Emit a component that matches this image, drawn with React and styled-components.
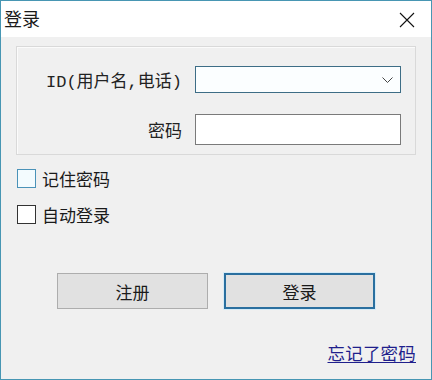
import React from "react";
import styled, { createGlobalStyle } from "styled-components";

const GlobalStyle = createGlobalStyle`
  html, body {
    margin: 0;
    padding: 0;
    background: #f0f0f0;
  }
  * {
    box-sizing: border-box;
  }
`;

const cjk = `"Microsoft YaHei", "Noto Sans CJK SC", "Noto Sans", sans-serif`;

const Window = styled.div`
  width: 432px;
  height: 380px;
  border: 1px solid #4796b3;
  background: #f0f0f0;
  display: flex;
  flex-direction: column;
  font-family: ${cjk};
  color: #1a1a1a;
`;

const TitleBar = styled.div`
  height: 36px;
  background: #ffffff;
  display: flex;
  align-items: center;
  justify-content: space-between;
  padding: 0 16px 0 3px;
`;

const Title = styled.span`
  font-size: 18px;
  line-height: 20px;
  margin-top: -2px;
`;

const CloseButton = styled.div`
  width: 16px;
  height: 16px;
  display: flex;
  margin-top: 1px;
`;

const Body = styled.div`
  flex: 1;
  display: flex;
  flex-direction: column;
  padding: 9px 15px 0 15px;
`;

const GroupBox = styled.div`
  border: 1px solid #d9d9d9;
  box-shadow: inset 1px 1px 0 #fbfbfb;
  height: 109px;
  display: grid;
  grid-template-columns: 165px 206px;
  grid-template-rows: 27px 31px;
  column-gap: 13px;
  row-gap: 21px;
  padding-top: 19px;
  align-items: center;
`;

const Label = styled.label`
  text-align: right;
  font-size: 17px;
  font-family: "Liberation Mono", ${cjk};
  font-weight: 400;
  white-space: nowrap;
  color: #222;
`;

const Combo = styled.div`
  height: 27px;
  border: 1px solid #3d6d86;
  background: #fbfeff;
  display: flex;
  align-items: center;
  justify-content: flex-end;
  padding-right: 7px;
`;

const TextInput = styled.div`
  height: 31px;
  border: 1px solid #7a7a7a;
  background: #ffffff;
`;

const Checks = styled.div`
  display: flex;
  flex-direction: column;
  gap: 17px;
  margin-top: 14px;
  padding-left: 1px;
`;

const CheckRow = styled.div`
  display: flex;
  align-items: center;
  gap: 6px;
  font-size: 17px;
  height: 19px;
`;

const Box = styled.span`
  width: 19px;
  height: 19px;
  border: 1px solid ${(p) => (p.$active ? "#4a92b8" : "#333333")};
  background: ${(p) => (p.$active ? "#f3fbfe" : "#ffffff")};
`;

const Buttons = styled.div`
  display: flex;
  justify-content: center;
  gap: 16px;
  margin-top: 49px;
`;

const Button = styled.div`
  width: 151px;
  height: 36px;
  background: #e1e1e1;
  border: ${(p) => (p.$primary ? "2px solid #2a6f9f" : "1px solid #adadad")};
  box-shadow: ${(p) => (p.$primary ? "0 0 0 1px #d5ebf7" : "none")};
  display: flex;
  align-items: center;
  justify-content: center;
  font-size: 17px;
`;

const Footer = styled.div`
  display: flex;
  justify-content: flex-end;
  margin-top: 31px;
`;

const Link = styled.a`
  font-size: 17.5px;
  color: #1f1f8c;
  text-decoration: underline;
  text-underline-offset: 2px;
  letter-spacing: 0.2px;
`;

export default function App() {
  return (
    <>
      <GlobalStyle />
      <Window>
        <TitleBar>
          <Title>登录</Title>
          <CloseButton>
            <svg width="16" height="16" viewBox="0 0 16 16">
              <path d="M1 1 L15 15 M15 1 L1 15" stroke="#111" strokeWidth="1.1" fill="none" />
            </svg>
          </CloseButton>
        </TitleBar>
        <Body>
          <GroupBox>
            <Label>ID(用户名,电话)</Label>
            <Combo>
              <svg width="11" height="6" viewBox="0 0 11 6">
                <path d="M0.5 0.5 L5.5 5.5 L10.5 0.5" stroke="#444" strokeWidth="1" fill="none" />
              </svg>
            </Combo>
            <Label>密码</Label>
            <TextInput />
          </GroupBox>
          <Checks>
            <CheckRow>
              <Box $active />
              记住密码
            </CheckRow>
            <CheckRow>
              <Box />
              自动登录
            </CheckRow>
          </Checks>
          <Buttons>
            <Button>注册</Button>
            <Button $primary>登录</Button>
          </Buttons>
          <Footer>
            <Link>忘记了密码</Link>
          </Footer>
        </Body>
      </Window>
    </>
  );
}
